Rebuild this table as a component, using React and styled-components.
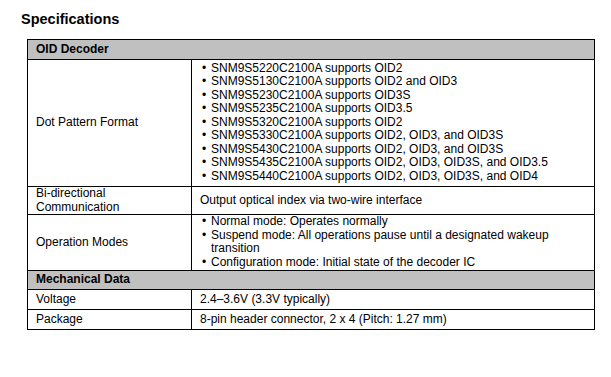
import React from "react";
import styled, { createGlobalStyle } from "styled-components";

const GlobalStyle = createGlobalStyle`
  body {
    margin: 0;
    background: #fff;
    font-family: "Liberation Sans", Arial, sans-serif;
    color: #000;
  }
`;

const dotPatterns = [
  "SNM9S5220C2100A supports OID2",
  "SNM9S5130C2100A supports OID2 and OID3",
  "SNM9S5230C2100A supports OID3S",
  "SNM9S5235C2100A supports OID3.5",
  "SNM9S5320C2100A supports OID2",
  "SNM9S5330C2100A supports OID2, OID3, and OID3S",
  "SNM9S5430C2100A supports OID2, OID3, and OID3S",
  "SNM9S5435C2100A supports OID2, OID3, OID3S, and OID3.5",
  "SNM9S5440C2100A supports OID2, OID3, OID3S, and OID4",
];

const modes = [
  "Normal mode: Operates normally",
  "Suspend mode: All operations pause until a designated wakeup transition",
  "Configuration mode: Initial state of the decoder IC",
];

const BulletList = ({ items }) => (
  <List>
    {items.map((t) => (
      <Item key={t}>
        <Bullet>•</Bullet>
        <span>{t}</span>
      </Item>
    ))}
  </List>
);

const App = () => {
  return (
    <Page>
      <GlobalStyle />
      <Title>Specifications</Title>
      <Table>
        <colgroup>
          <col style={{ width: 164 }} />
          <col />
        </colgroup>
        <tbody>
          <Row $h={20}>
            <HeadCell colSpan={2}>OID Decoder</HeadCell>
          </Row>
          <Row $h={127}>
            <Cell>Dot Pattern Format</Cell>
            <Cell $list>
              <BulletList items={dotPatterns} />
            </Cell>
          </Row>
          <Row $h={28}>
            <Cell>
              Bi-directional
              <br />
              Communication
            </Cell>
            <Cell>Output optical index via two-wire interface</Cell>
          </Row>
          <Row $h={56}>
            <Cell>Operation Modes</Cell>
            <Cell $list>
              <BulletList items={modes} />
            </Cell>
          </Row>
          <Row $h={19}>
            <HeadCell colSpan={2}>Mechanical Data</HeadCell>
          </Row>
          <Row $h={20}>
            <Cell>Voltage</Cell>
            <Cell>2.4–3.6V (3.3V typically)</Cell>
          </Row>
          <Row $h={20}>
            <Cell>Package</Cell>
            <Cell>8-pin header connector, 2 x 4 (Pitch: 1.27 mm)</Cell>
          </Row>
        </tbody>
      </Table>
    </Page>
  );
};

export default App;

const Page = styled.div`
  width: 611px;
  height: 377px;
  padding: 11px 0 0 21px;
  box-sizing: border-box;
`;

const Title = styled.h2`
  margin: 0 0 11px;
  font-size: 14.5px;
  font-weight: 700;
  line-height: 17px;
`;

const Table = styled.table`
  margin-left: 6px;
  width: 568px;
  border-collapse: collapse;
  table-layout: fixed;
  border: 1.5px solid #000;
  font-size: 12px;
  line-height: 13.5px;
`;

const Row = styled.tr`
  height: ${(p) => p.$h}px;
`;

const Cell = styled.td`
  border: 1px solid #000;
  padding: ${(p) => (p.$list ? "0 7px 1px 8px" : "0 8px")};
  vertical-align: middle;
`;

const HeadCell = styled.td`
  border: 1px solid #000;
  background: #c0c0c0;
  padding: 0 8px;
  font-weight: 700;
  vertical-align: middle;
`;

const List = styled.ul`
  list-style: none;
  margin: 0;
  padding: 0;
`;

const Item = styled.li`
  display: flex;
  align-items: flex-start;
`;

const Bullet = styled.span`
  flex: 0 0 11px;
  padding-left: 2px;
  box-sizing: border-box;
`;
